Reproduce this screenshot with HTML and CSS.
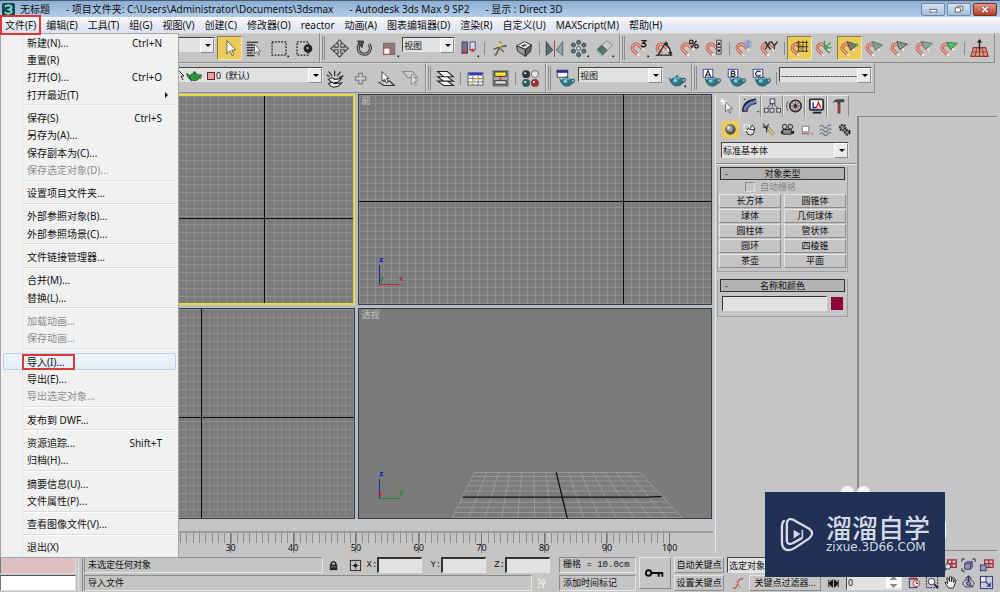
FILE: index.html
```html
<!DOCTYPE html>
<html lang="zh-CN">
<head>
<meta charset="utf-8">
<meta name="viewport" content="width=device-width, initial-scale=1">
<title>无标题 - Autodesk 3ds Max 9 SP2</title>
<link rel="stylesheet" href="styles.css">
</head>
<body>
<svg class="defs" aria-hidden="true">
  <symbol id="magnet" viewBox="0 0 24 24">
    <path d="M11 20 5 14.500A4.300 4.300 0 0 1 11 8.200L17 14" fill="none" stroke="#b0503c" stroke-width="3.600"/>
    <path d="M11 20 5 14.500A4.300 4.300 0 0 1 11 8.200L17 14" fill="none" stroke="#f0ab98" stroke-width="1.800"/>
    <path d="M9.500 18.500 11.500 20.300M15.300 12.300 17.300 14.200" stroke="#f1eeea" stroke-width="3.400"/>
  </symbol>
  <symbol id="teapot" viewBox="0 0 24 24">
    <path d="M17 12q5-2 5 1t-5 4" fill="none" stroke="#27606b" stroke-width="1.500"/>
    <path d="M6 13 2 9.500 3.500 15 8 19z" fill="#357987"/>
    <ellipse cx="12" cy="15" rx="7" ry="5.500" fill="#2f7685" stroke="#1e4d59" stroke-width=".7"/>
    <ellipse cx="12" cy="11" rx="4.500" ry="1.600" fill="#5daab5"/>
    <ellipse cx="10" cy="14" rx="2.500" ry="2" fill="#8bd0d5"/>
    <circle cx="12" cy="8.500" r="1.200" fill="#25606b"/>
  </symbol>
  <symbol id="arrow" viewBox="0 0 24 24">
    <path d="M9 3v15l3.500-3.500 2.500 5.500 2-1-2.400-5.300H19z" fill="#fff" stroke="#555" stroke-width="1"/>
  </symbol>
  <symbol id="more" viewBox="0 0 24 24"><path d="M21 20h2v2h-2z" fill="#222"/></symbol>
  <pattern id="grid" width="8" height="8" patternUnits="userSpaceOnUse">
    <path d="M0 .5H8M.5 0V8" stroke="#8e8e8e" fill="none"/>
  </pattern>
</svg>

<header class="titlebar">
  <svg class="logo" viewBox="0 0 14 14"><rect width="14" height="14" rx="2" fill="#11494f"/><path d="M3 4q4-3 7 0 1 2-2 3 3 1 2 3-3 3-7 0" fill="none" stroke="#7fe0d5" stroke-width="2"/></svg>
  <h1 class="title"><span>无标题</span><span>- 项目文件夹: C:\Users\Administrator\Documents\3dsmax</span><span>- Autodesk 3ds Max 9 SP2</span><span>- 显示 : Direct 3D</span></h1>
  <div class="window-buttons">
    <button aria-label="最小化"><svg viewBox="0 0 24 13"><rect x="8.500" y="6.500" width="8" height="3" fill="#fff" stroke="#666"/></svg></button>
    <button aria-label="还原"><svg viewBox="0 0 24 13"><rect x="10.500" y="2.500" width="6" height="5" fill="#fff" stroke="#555"/><rect x="7.500" y="4.500" width="6" height="5" fill="#fff" stroke="#555"/></svg></button>
    <button class="close" aria-label="关闭"><svg viewBox="0 0 24 13"><path d="m9 3.500 6 6m0-6-6 6" stroke="#733" stroke-width="3.200"/><path d="m9 3.500 6 6m0-6-6 6" stroke="#fff" stroke-width="2"/></svg></button>
  </div>
</header>

<nav class="menubar">
  <button class="marked">文件(F)</button><button>编辑(E)</button><button>工具(T)</button><button>组(G)</button><button>视图(V)</button><button>创建(C)</button><button>修改器(O)</button><button>reactor</button><button>动画(A)</button><button>图表编辑器(D)</button><button>渲染(R)</button><button>自定义(U)</button><button>MAXScript(M)</button><button>帮助(H)</button>
</nav>

<div class="app">
  <div class="toolbar">
    <div class="group lead">
      <span class="combo grow"><select aria-label="选择过滤器"><option></option></select></span>
      <button class="tool on" aria-label="选择对象"><svg viewBox="0 0 24 24"><use href="#arrow"/></svg></button>
      <button class="tool" aria-label="按名称选择"><svg viewBox="0 0 24 24"><path d="M3 5h13M3 8h8M3 11h10M3 14h8M3 17h7M3 20h9" stroke="#333" stroke-width="1.600"/><path d="M12 7v11l2.500-2.500 2 4 1.500-.8-2-3.700h3z" fill="#fff" stroke="#444" stroke-width=".8"/></svg></button>
      <button class="tool" aria-label="矩形选择区域"><svg viewBox="0 0 24 24"><rect x="3.500" y="4.500" width="16" height="15" fill="none" stroke="#222" stroke-width="1.500" stroke-dasharray="2 1.500"/><use href="#more"/></svg></button>
      <button class="tool" aria-label="窗口/交叉"><svg viewBox="0 0 24 24"><rect x="3.500" y="4.500" width="13" height="15" fill="none" stroke="#222" stroke-width="1.500" stroke-dasharray="2 1.500"/><circle cx="16" cy="12" r="5" fill="#222"/><circle cx="15.500" cy="11.500" r="1.600" fill="#999"/></svg></button>
    </div>
    <div class="group">
      <i class="grip"></i>
      <button class="tool" aria-label="移动"><svg viewBox="0 0 24 24"><path d="m12 2 4 4.500h-2.500v4h4V8L22 12l-4.500 4v-2.500h-4v4H16L12 22l-4-4.500h2.500v-4h-4V16L2 12l4.500-4v2.500h4v-4H8z" fill="#bdbdbd" stroke="#444" stroke-width="1.200"/></svg></button>
      <button class="tool" aria-label="旋转"><svg viewBox="0 0 24 24"><path d="M7 6.500A7 7 0 1 0 17 7" fill="none" stroke="#333" stroke-width="3.500"/><path d="M7 6.500A7 7 0 1 0 17 7" fill="none" stroke="#aaa" stroke-width="1.300"/><path d="M4 3.500h7L9 11z" fill="#555" stroke="#222"/></svg></button>
      <button class="tool" aria-label="缩放"><svg viewBox="0 0 24 24"><rect x="5" y="6" width="13" height="13" fill="#8c7a7a" stroke="#666"/><rect x="5.500" y="11.500" width="7" height="7" fill="#fff" stroke="#a44"/><use href="#more"/></svg></button>
      <span class="combo w-coord"><select aria-label="参考坐标系"><option>视图</option></select></span>
      <button class="tool" aria-label="使用轴点中心"><svg viewBox="0 0 24 24"><rect x="3.500" y="4.500" width="6" height="13" fill="#77779a" stroke="#335"/><rect x="12.500" y="4.500" width="6" height="9" fill="#d9d9ee" stroke="#446"/><circle cx="6.500" cy="16" r="2" fill="#d33"/><circle cx="15.500" cy="14" r="2" fill="#d33"/><use href="#more"/></svg></button>
      <i class="sep"></i>
      <button class="tool" aria-label="选择并操纵"><svg viewBox="0 0 24 24"><path d="M13 4v7M5 13l8-3 6-1M12 11l-4 8M13 12l4 4" stroke="#665f46" stroke-width="1.800" fill="none"/><path d="M11 6h3v4h-3z" fill="#e6d75e"/><circle cx="7.500" cy="19" r="1.500" fill="#777"/><circle cx="19" cy="9" r="1.500" fill="#777"/></svg></button>
      <button class="tool" aria-label="命名选择集"><svg viewBox="0 0 24 24"><path d="m3 9 9-5 8 4-7 5z" fill="#eee" stroke="#222"/><path d="m3 9 10 4v8L4 15z" fill="#999" stroke="#222"/><path d="m20 8-7 5v8l6-6z" fill="#666" stroke="#222"/><path d="m8 9 4-2 3 1-4 2z" fill="#333"/></svg></button>
      <i class="sep"></i>
      <button class="tool" aria-label="镜像"><svg viewBox="0 0 24 24"><path d="M2.500 4v16L10 14z" fill="#5c6f75" stroke="#33464c"/><path d="M21.500 4v16L14 14z" fill="#8ba5aa" stroke="#566"/><path d="M12 3v19" stroke="#a24c44" stroke-width="1.200"/></svg></button>
      <button class="tool" aria-label="阵列"><svg viewBox="0 0 24 24" fill="#5f7580" stroke="#35454d"><circle cx="11" cy="5" r="2.300"/><circle cx="17" cy="8" r="2.300"/><circle cx="17" cy="15" r="2.300"/><circle cx="11" cy="19" r="2.300"/><circle cx="5" cy="15" r="2.300"/><circle cx="5" cy="8" r="2.300"/><circle cx="11" cy="12" r="2.300" fill="#d8e4e8"/><use href="#more" stroke="none"/></svg></button>
      <button class="tool" aria-label="对齐"><svg viewBox="0 0 24 24"><path d="m3 14 6-6 6 6-6 6z" fill="#4d7470" stroke="#355"/><path d="m9 8 6-5 6 5-6 6z" fill="#ccc" stroke="#777"/><path d="m3 14 6 6" stroke="#8fb7b0" stroke-width="2"/><use href="#more"/></svg></button>
    </div>
    <div class="group">
      <i class="grip"></i>
      <button class="tool" aria-label="捕捉开关"><svg viewBox="0 0 24 24"><use href="#magnet"/><path d="M14 3h5l-3 3q4 0 3 3-2 2-5 0" fill="none" stroke="#222" stroke-width="1.700"/><use href="#more"/></svg></button>
      <button class="tool" aria-label="角度捕捉"><svg viewBox="0 0 24 24"><use href="#magnet"/><path d="M2 19.500h19M5 19 14 4M13 7q6 3 6 12" fill="none" stroke="#222" stroke-width="1.300"/><path d="m11 6 5-1-1 5zM16 16h5l-2 4z" fill="#222"/></svg></button>
      <button class="tool" aria-label="百分比捕捉"><svg viewBox="0 0 24 24"><use href="#magnet"/><path d="m14 11 6-8" stroke="#222" stroke-width="1.600"/><circle cx="14" cy="4.500" r="2" fill="none" stroke="#222" stroke-width="1.500"/><circle cx="20" cy="9.500" r="2" fill="none" stroke="#222" stroke-width="1.500"/></svg></button>
      <button class="tool" aria-label="微调器捕捉"><svg viewBox="0 0 24 24"><use href="#magnet"/><path d="M14.500 2.500h5v8h-5zm0 8h5v8h-5z" fill="#ddd" stroke="#333"/><path d="m15 8 2-4 2 4zm0 5h4l-2 4z" fill="#222"/></svg></button>
      <i class="sep"></i>
      <button class="tool" aria-label="冻结对象捕捉"><svg viewBox="0 0 24 24"><use href="#magnet"/><path d="M16 2v10M11.500 4.500l9 5M20.500 4.500l-9 5M14 3l2 2 2-2M14 11l2-2 2 2" fill="none" stroke="#7e97d6" stroke-width="1.400"/></svg></button>
      <button class="tool" aria-label="轴约束捕捉"><svg viewBox="0 0 24 24"><use href="#magnet"/><path d="m7 4 6 9m0-9-6 9M14 4l3.500 5L21 4m-3.500 5v4" fill="none" stroke="#333" stroke-width="1.600"/></svg></button>
      <i class="sep"></i>
      <button class="tool on" aria-label="捕捉到栅格点"><svg viewBox="0 0 24 24"><use href="#magnet"/><path d="M11 3v13M16 3v13M20 3v13M8 5h14M9 10h13M9 15h13" stroke="#443b1d" stroke-width="1.100"/></svg></button>
      <button class="tool" aria-label="捕捉到轴"><svg viewBox="0 0 24 24"><use href="#magnet"/><path d="m12 12 8-1M12 12V3M12 12l7-7M12 12l6 5" stroke="#3c9a55" stroke-width="1.500"/></svg></button>
      <button class="tool on" aria-label="捕捉到顶点"><svg viewBox="0 0 24 24"><use href="#magnet"/><path d="m9 4 12 4-8 6z" fill="#7c7a68" stroke="#444"/><circle cx="20.500" cy="8" r="1.700" fill="#3cae4e"/></svg></button>
      <button class="tool" aria-label="捕捉到端点"><svg viewBox="0 0 24 24"><use href="#magnet"/><path d="m9 4 12 4-8 6z" fill="#87a18a" stroke="#667"/><path d="m10 4 11 4" stroke="#3cae4e" stroke-width="1.500"/></svg></button>
      <button class="tool" aria-label="捕捉到中点"><svg viewBox="0 0 24 24"><use href="#magnet"/><path d="m9 4 12 3-9 6z" fill="#98a79a" stroke="#444"/><circle cx="14" cy="7" r="1.700" fill="#3cae4e"/></svg></button>
      <button class="tool" aria-label="捕捉到边"><svg viewBox="0 0 24 24"><use href="#magnet"/><path d="m8 4 13 2-8 7z" fill="#7fb388" stroke="#667"/></svg></button>
      <button class="tool" aria-label="捕捉到面"><svg viewBox="0 0 24 24"><use href="#magnet"/><path d="m9 5 12 1-8 7z" fill="#41d267" stroke="#465"/></svg></button>
      <i class="sep"></i>
      <button class="tool" aria-label="栅格"><svg viewBox="0 0 24 24"><path d="m5 11-3 10h20l-3-10z" fill="#e39283" stroke="#8e392d" stroke-width="1.200"/><path d="M4 16h16M9 11l-2 10M15 11l2 10M12 11v10" stroke="#8e392d"/><path d="M12 14V4" stroke="#222" stroke-width="1.600"/><path d="m12 1 3 4H9z" fill="#222"/></svg></button>
    </div>
  </div>

  <div class="toolbar">
    <div class="group lead-wide">
      <span class="combo grow layer"><select aria-label="图层"><option>0&nbsp;&nbsp;(默认)</option></select>
        <svg class="layer-icons" viewBox="0 0 38 12"><path d="m0 1 5 5-3 0 2 4" fill="#fff" stroke="#222"/><path d="M11 6 8 4l1 3 3 3zM20 5q4-1 1 4" fill="none" stroke="#145a1e" stroke-width="1.200"/><ellipse cx="15.500" cy="7" rx="5" ry="3.600" fill="#2a9a38" stroke="#0d4a17" stroke-width=".8"/><circle cx="15.500" cy="2.500" r="1.200" fill="#145a1e"/><rect x="28.500" y="2.500" width="7" height="7" fill="#e9a2a2" stroke="#623"/></svg></span>
      <button class="tool" aria-label="新建图层"><svg viewBox="0 0 24 24"><path d="m4 13 4-2 3 2 8-1-4 4-5 1-3-1zM4 18l4-2 3 2 8-1-4 4-5 1-3-1z" fill="#eee" stroke="#222" stroke-width="1.200"/><path d="M11 9V3M8 9 4 4M14 9l4-5M16 11l5-2M5 10 2 8" stroke="#222" stroke-width="1.300"/></svg></button>
      <button class="tool" aria-label="添加到图层"><svg viewBox="0 0 24 24"><path d="M10 6h4v4h4v4h-4v4h-4v-4H6v-4h4z" fill="#ccc" stroke="#777" stroke-width="1.300"/></svg></button>
      <button class="tool" aria-label="选择图层对象"><svg viewBox="0 0 24 24"><path d="m4 16 6 4h12l-5-5H9" fill="#ccc" stroke="#333" stroke-width="1.300"/><path d="M8 4v11l3-2 2 4 2-1-2-4h3z" fill="#fff" stroke="#333"/></svg></button>
      <button class="tool" aria-label="设为当前图层"><svg viewBox="0 0 24 24"><path d="M3 4h11l6 7H9z" fill="#ccc" stroke="#888" stroke-width="1.300"/><path d="M13 7v12l3-3 2 4 1-1-2-4h3z" fill="#ddd" stroke="#888"/></svg></button>
    </div>
    <div class="group">
      <i class="grip"></i>
      <button class="tool" aria-label="层管理器"><svg viewBox="0 0 24 24"><path d="M3 15h11l7 5H10zM3 10h11l7 5H10zM3 4h11l7 6H10z" fill="#fff" stroke="#222" stroke-width="1.200"/></svg></button>
      <i class="sep"></i>
      <button class="tool" aria-label="曲线编辑器"><svg viewBox="0 0 24 24"><rect x="3.500" y="5.500" width="17" height="14" fill="#fff" stroke="#445"/><path d="M4 7h16" stroke="#3a34c4" stroke-width="3"/><path d="M9 9v10M4 12h16M4 16h16M15 9v10" stroke="#667"/><path d="m7 18 6-6 6 2" stroke="#d8cf38" stroke-width="1.500" fill="none"/></svg></button>
      <button class="tool" aria-label="图解视图"><svg viewBox="0 0 24 24"><rect x="3.500" y="3.500" width="17" height="17" fill="#aaa" stroke="#444"/><rect x="5.500" y="4.500" width="13" height="5" fill="#f4e53b" stroke="#222"/><rect x="5.500" y="14.500" width="13" height="4" fill="#ddd" stroke="#222"/><path d="M12 10v4" stroke="#c33" stroke-width="2"/></svg></button>
      <i class="sep"></i>
      <button class="tool" aria-label="材质编辑器"><svg viewBox="0 0 24 24"><circle cx="7" cy="7" r="4.500" fill="#2a3444"/><circle cx="17" cy="7" r="4" fill="#e6e6e6" stroke="#666"/><circle cx="7" cy="17" r="4.500" fill="#285f57"/><circle cx="17" cy="17" r="4.500" fill="#9c2c33"/><g fill="#fff"><circle cx="6" cy="6" r="1.200"/><circle cx="6" cy="16" r="1.200"/><circle cx="16" cy="16" r="1.200"/></g></svg></button>
    </div>
    <div class="group">
      <i class="grip"></i>
      <button class="tool" aria-label="渲染场景"><svg viewBox="0 0 24 24"><rect x="2.500" y="2.500" width="12" height="8" fill="#fff" stroke="#335"/><path d="M2 4h13" stroke="#2b2c9a" stroke-width="3"/><use href="#teapot" x="3" y="3" width="21" height="21"/></svg></button>
      <span class="combo w-view"><select aria-label="渲染类型"><option>视图</option></select></span>
      <button class="tool" aria-label="快速渲染"><svg viewBox="0 0 24 24"><use href="#teapot" x="1" y="1" width="23" height="23"/><use href="#more"/></svg></button>
    </div>
    <div class="group">
      <i class="grip"></i>
      <button class="tool" aria-label="渲染预设 A"><svg viewBox="0 0 24 24"><use href="#teapot" x="2" y="2" width="22" height="22"/><rect x="2.500" y="1.500" width="11" height="9" fill="#fff" stroke="#3538a0"/><path d="m5 10 3-7 3 7M6 8h4" fill="none" stroke="#222" stroke-width="1.300"/></svg></button>
      <button class="tool" aria-label="渲染预设 B"><svg viewBox="0 0 24 24"><use href="#teapot" x="2" y="2" width="22" height="22"/><rect x="2.500" y="1.500" width="11" height="9" fill="#fff" stroke="#3538a0"/><path d="M6 3.500h3q2 1.500 0 3 3 1 0 3H6zM6 6.500h3" fill="none" stroke="#222" stroke-width="1.300"/></svg></button>
      <button class="tool" aria-label="渲染预设 C"><svg viewBox="0 0 24 24"><use href="#teapot" x="2" y="2" width="22" height="22"/><rect x="2.500" y="1.500" width="11" height="9" fill="#fff" stroke="#3538a0"/><path d="M11 4.500Q8 2.500 6 5t1 4q2 1 4-1" fill="none" stroke="#222" stroke-width="1.300"/></svg></button>
      <i class="sep"></i>
      <span class="combo w-preset"><select aria-label="渲染预设"><option>---------------------------</option></select></span>
    </div>
  </div>

  <div class="workspace">
    <main class="stage">
      <section class="viewports">
        <div class="viewport active"><svg class="canvas"><rect width="100%" height="100%" fill="url(#grid)"/><line x1="75%" x2="75%" y2="100%"/><line y1="59%" y2="59%" x2="100%"/></svg></div>
        <div class="viewport"><svg class="canvas"><rect width="100%" height="100%" fill="url(#grid)"/><line x1="75%" x2="75%" y2="100%"/><line y1="51%" y2="51%" x2="100%"/></svg>
          <span class="view-name">前</span>
          <svg class="tripod" viewBox="0 0 32 34"><path d="M2.500 10v20" stroke="#22a"/><path d="M2 29.500h21" stroke="#b02a38"/><text x="2" y="7" fill="#11b">z</text><text x="2" y="26" fill="#2a7a3c">y</text><text x="22" y="26" fill="#b02a38">x</text></svg></div>
        <div class="viewport"><svg class="canvas"><rect width="100%" height="100%" fill="url(#grid)"/><line x1="57%" x2="57%" y2="100%"/><line y1="52%" y2="52%" x2="100%"/></svg></div>
        <div class="viewport"><svg class="canvas" viewBox="0 0 353 209" preserveAspectRatio="xMidYMax meet">
            <g stroke="#a0a0a0" stroke-width=".8"><path d="M116 163.500H281M114 167.500H284M112 172H289M109 177H294M106 182H299M101 193H309M99 198.500H314M96 203.500H318M94 208.500H323"/><path d="M116 163 93 209M128 163 110 209M140 163 126 209M151 163 143 209M163 163 159 209M175 163 176 209M187 163 192 209M210 163 225 209M222 163 241 209M234 163 258 209M246 163 275 209M257 163 291 209M269 163 308 209M281 163 324 209"/></g>
            <path d="M104 188h187l6-.5h6M197.500 163l11 46" stroke="#111" stroke-width="1.300" fill="none"/></svg>
          <span class="view-name">透视</span>
          <svg class="tripod" viewBox="0 0 32 34"><path d="M2.500 10v20" stroke="#22a"/><path d="M2 29.500h21" stroke="#1d8a1d"/><text x="2" y="7" fill="#11b">z</text><text x="1" y="27" fill="#c22">x</text><text x="22" y="25" fill="#1d8a1d">y</text></svg></div>
      </section>
      <div class="ruler"><span></span><span></span><span></span><span>30</span><span>40</span><span>50</span><span>60</span><span>70</span><span>80</span><span>90</span><span class="last">100</span></div>
    </main>

    <aside class="panel">
      <div class="command">
        <div class="tabs">
          <button aria-label="创建"><svg viewBox="0 0 20 18"><path d="M8 5v10l2.500-2.500 2 4 1.500-1-2-3.500h3.500z" fill="#fff" stroke="#666"/><path d="M5 1v7M2 4h7M3 2l5 5" stroke="#fff" stroke-width="1.200"/></svg></button>
          <button aria-label="修改"><svg viewBox="0 0 20 18"><path d="M4 15Q4 5 16 4" fill="none" stroke="#1b2238" stroke-width="6"/><path d="M4 14Q5 6 16 4" fill="none" stroke="#7280b8" stroke-width="3"/><path d="M3 2h2M17 15h2" stroke="#333"/></svg></button>
          <button aria-label="层次"><svg viewBox="0 0 20 18"><path d="M10 6v4M9 6l-6 7M11 6l6 7" stroke="#445"/><g fill="#ddd" stroke="#445"><rect x="7.500" y="1.500" width="5" height="5"/><rect x="1.500" y="11.500" width="4" height="4"/><rect x="7.500" y="11.500" width="4" height="4"/><rect x="14.500" y="11.500" width="4" height="4"/></g></svg></button>
          <button aria-label="运动"><svg viewBox="0 0 20 18"><circle cx="11" cy="9" r="6" fill="#bbb" stroke="#222" stroke-width="1.600"/><path d="M11 3v12M5 9h12M7 5l8 8M15 5l-8 8" stroke="#855"/><circle cx="11" cy="9" r="2" fill="#333"/><path d="M3 4Q0 9 3 14" fill="none" stroke="#555"/></svg></button>
          <button aria-label="显示"><svg viewBox="0 0 20 18"><rect x="3" y="2" width="14" height="11" rx="1" fill="#fff" stroke="#333" stroke-width="2"/><path d="M6.500 5v5.500h3" stroke="#22b" stroke-width="1.500" fill="none"/><path d="m10 11 2-6 2.500 6" stroke="#c23" stroke-width="1.500" fill="none"/><path d="M6 16h9" stroke="#222" stroke-width="2"/></svg></button>
          <button aria-label="工具"><svg viewBox="0 0 20 18"><path d="M4 6q1-4 6-4h6v3h-4v2H9V5Q6 4 4 6z" fill="#444"/><path d="M10.500 7v10" stroke="#8e3c34" stroke-width="3"/></svg></button>
        </div>
        <div class="categories">
          <button class="on" aria-label="几何体"><svg viewBox="0 0 16 16"><circle cx="8" cy="8" r="5" fill="#555" stroke="#444"/><circle cx="7" cy="7" r="3.500" fill="#9aa2a6"/><circle cx="6" cy="6" r="1.500" fill="#eee"/></svg></button>
          <button aria-label="图形"><svg viewBox="0 0 16 16"><circle cx="9" cy="10" r="4" fill="#ddd" stroke="#222"/><path d="M2 3h6v6H2z" fill="none" stroke="#eee"/><path d="m8 8 3-5 3 5z" fill="#eee" stroke="#333"/></svg></button>
          <button aria-label="灯光"><svg viewBox="0 0 16 16"><path d="m5 5 3 0 6 7-2 2z" fill="#eadd77" stroke="#776"/><path d="m2 2 5 5M8 2 6 7v4M2 5l5 2" stroke="#333" fill="none" stroke-width="1.200"/></svg></button>
          <button aria-label="摄影机"><svg viewBox="0 0 16 16"><circle cx="5" cy="5" r="2.500" fill="#bbb" stroke="#222"/><circle cx="11" cy="5" r="2.500" fill="#bbb" stroke="#222"/><path d="M3 8h9v5H3z" fill="#888" stroke="#222"/><path d="m1 9 2 1v2l-2 1zM15 9l-3 1v2l3 1z" fill="#222"/></svg></button>
          <button aria-label="辅助对象"><svg viewBox="0 0 16 16"><rect x="3.500" y="4.500" width="7" height="6" fill="#fff" stroke="#778"/><path d="M3 12.500h8M13 12.500h2" stroke="#a44"/></svg></button>
          <button aria-label="空间扭曲"><svg viewBox="0 0 16 16"><path d="M2 5q2-3 4 0t4 0 4-1M2 9q2-3 4 0t4 0 4-1M2 13q2-3 4 0t4 0 4-1" fill="none" stroke="#5f7183" stroke-width="1.200"/></svg></button>
          <button aria-label="系统"><svg viewBox="0 0 16 16"><circle cx="6" cy="6" r="3" fill="#888" stroke="#222" stroke-width="2" stroke-dasharray="2 1"/><circle cx="11" cy="11" r="2.500" fill="#888" stroke="#222" stroke-width="2" stroke-dasharray="2 1"/></svg></button>
        </div>
        <span class="combo kind"><select aria-label="类别"><option>标准基本体</option></select></span>
        <div class="rollouts">
          <section class="rollout">
            <h2><button><span>-</span>对象类型</button></h2>
            <label class="auto"><input type="checkbox" disabled>自动栅格</label>
            <div class="objects"><button>长方体</button><button>圆锥体</button><button>球体</button><button>几何球体</button><button>圆柱体</button><button>管状体</button><button>圆环</button><button>四棱锥</button><button>茶壶</button><button>平面</button></div>
          </section>
          <section class="rollout">
            <h2><button><span>-</span>名称和颜色</button></h2>
            <div class="name-row"><input type="text" aria-label="名称"><button class="swatch" aria-label="颜色"></button></div>
          </section>
        </div>
      </div>
      <div class="empty"></div>
    </aside>
  </div>

  <footer class="status">
    <div class="listener"><input class="pink" aria-label="宏录制器"><input aria-label="侦听器"></div>
    <div class="messages">
      <div class="line">
        <output class="cell grow">未选定任何对象</output>
        <button class="plain" aria-label="选择锁定"><svg viewBox="0 0 14 14"><path d="M4.500 7V4.500q2.500-3 5 0V7" fill="none" stroke="#222" stroke-width="1.500"/><rect x="3" y="6" width="8" height="6" fill="#222"/><path d="M4 8.500h6" stroke="#888"/></svg></button>
        <button class="plain" aria-label="绝对模式"><svg viewBox="0 0 14 14"><rect x="1.500" y="1.500" width="11" height="11" fill="none" stroke="#222"/><path d="M7 3v8M3 7h8" stroke="#555"/><circle cx="7" cy="7" r="2" fill="#222"/></svg></button>
        <label class="axis">X:<input type="text"></label><label class="axis">Y:<input type="text"></label><label class="axis">Z:<input type="text"></label>
      </div>
      <div class="line"><output class="cell grow">导入文件</output><svg class="mini" viewBox="0 0 14 14"><path d="M5 2v3h3M4 8l4-1 2 5M9 3l2 3-3 5M3 11l3 1" fill="none" stroke="#e6e6dc" stroke-width="1.500"/></svg></div>
    </div>
    <div class="stack w-grid"><output class="cell mono">栅格 = 10.0cm</output><button class="cell">添加时间标记</button></div>
    <button class="key" aria-label="设置关键点"><svg viewBox="0 0 24 14"><circle cx="5" cy="7" r="3" fill="none" stroke="#111" stroke-width="2"/><path d="M8 7h13M16 7v4M20 7v4" stroke="#111" stroke-width="2"/></svg></button>
    <div class="stack w-auto"><button class="raised">自动关键点</button><button class="raised">设置关键点</button></div>
    <div class="stack w-filter">
      <span class="combo"><select aria-label="选择集"><option>选定对象</option></select></span>
      <div class="line"><button class="plain" aria-label="切线"><svg viewBox="0 0 14 14"><path d="M1 12q4 1 5-5t6-5" fill="none" stroke="#c33" stroke-width="1.200"/><path d="m4 4 5 8" stroke="#a88"/></svg></button><button class="raised grow">关键点过滤器...</button></div>
    </div>
    <button class="plain low step" aria-label="关键点模式"><svg viewBox="0 0 14 14"><path d="M2 3v8M12 3v8M2 7l4-4v8zM12 7 8 3v8z" fill="#111" stroke="#111"/></svg></button>
    <input class="frame low" type="number" value="0" aria-label="当前帧">
    <div class="nav">
      <button aria-label="播放"></button><button aria-label="缩放"></button>
      <button aria-label="缩放全部"><svg viewBox="0 0 16 16"><path d="M5 2h9v8H5zM9.500 2v8M5 6h9" fill="#e8c0c0" stroke="#9a2c3a" stroke-width="1.500"/><circle cx="5" cy="9" r="3" fill="#ddd" stroke="#335"/><path d="m3 11-2 3" stroke="#335" stroke-width="2"/></svg></button>
      <button aria-label="最大化显示"><svg viewBox="0 0 16 16"><path d="m4 6 2-2h6v6l-2 2H4zM4 6h6v6M10 6l2-2" fill="#99a" stroke="#337"/><path d="M1 4V1h3M12 1h3v3M1 11v3h3" fill="none" stroke="#222"/></svg></button>
      <button aria-label="所有视图最大化显示"><svg viewBox="0 0 16 16"><path d="M6 2h9v8H6zM10.500 2v8M6 6h9" fill="#d8b0b8" stroke="#9a2c3a" stroke-width="1.300"/><rect x="1.500" y="7.500" width="6" height="6" fill="#99b" stroke="#337"/></svg></button>
      <button aria-label="时间配置"><svg viewBox="0 0 16 16"><rect x="2.500" y="3.500" width="8" height="10" fill="#ccc" stroke="#335"/><path d="M2 4h9" stroke="#a33" stroke-width="2"/><circle cx="10" cy="9" r="3.500" fill="#eee" stroke="#a33"/><path d="M10 7v2h2" fill="none" stroke="#222"/></svg></button>
      <button aria-label="缩放区域"><svg viewBox="0 0 16 16"><rect x="1.500" y="1.500" width="12" height="12" fill="none" stroke="#222" stroke-dasharray="2 1"/><circle cx="7" cy="7" r="3.500" fill="#eee" stroke="#335"/><path d="m10 10 4 4" stroke="#224" stroke-width="2"/></svg></button>
      <button aria-label="平移"><svg viewBox="0 0 16 16"><path d="M6 14 2 8q1-1 3 1L4 3q1-1 2 1l1 3V2q1-1 2 0v5l1-4q1-1 2 0l-1 5 2-3q1 0 1 1l-3 8z" fill="#eee" stroke="#222"/></svg></button>
      <button aria-label="弧形旋转"><svg viewBox="0 0 16 16"><ellipse cx="8" cy="9" rx="6" ry="4" fill="none" stroke="#335"/><path d="M8 1v9M8 10l5 3M5 4l3-3 3 3" fill="none" stroke="#335" stroke-width="1.200"/><circle cx="8" cy="9" r="2" fill="#99b" stroke="#224"/></svg></button>
      <button aria-label="最大化视口切换"><svg viewBox="0 0 16 16"><rect x="1.500" y="1.500" width="13" height="13" fill="#ccd" stroke="#337"/><rect x="1.500" y="1.500" width="6" height="6" fill="#eee" stroke="#337"/><path d="m7 7 5 5M12 8v4H8" fill="none" stroke="#337" stroke-width="1.300"/></svg></button>
    </div>
  </footer>

  <menu class="file-menu">
    <li><button>新建(N)...<kbd>Ctrl+N</kbd></button></li>
    <li><button>重置(R)</button></li>
    <li><button>打开(O)...<kbd>Ctrl+O</kbd></button></li>
    <li><button>打开最近(T)<i class="sub"></i></button></li>
    <li class="rule"></li>
    <li><button>保存(S)<kbd>Ctrl+S</kbd></button></li>
    <li><button>另存为(A)...</button></li>
    <li><button>保存副本为(C)...</button></li>
    <li><button disabled>保存选定对象(D)...</button></li>
    <li class="rule"></li>
    <li><button>设置项目文件夹...</button></li>
    <li class="rule"></li>
    <li><button>外部参照对象(B)...</button></li>
    <li><button>外部参照场景(C)...</button></li>
    <li class="rule"></li>
    <li><button>文件链接管理器...</button></li>
    <li class="rule"></li>
    <li><button>合并(M)...</button></li>
    <li><button>替换(L)...</button></li>
    <li class="rule"></li>
    <li><button disabled>加载动画...</button></li>
    <li><button disabled>保存动画...</button></li>
    <li class="rule"></li>
    <li><button class="hot"><span class="marked">导入(I)...</span></button></li>
    <li><button>导出(E)...</button></li>
    <li><button disabled>导出选定对象...</button></li>
    <li class="rule"></li>
    <li><button>发布到 DWF...</button></li>
    <li class="rule"></li>
    <li><button>资源追踪...<kbd>Shift+T</kbd></button></li>
    <li><button>归档(H)...</button></li>
    <li class="rule"></li>
    <li><button>摘要信息(U)...</button></li>
    <li><button>文件属性(P)...</button></li>
    <li class="rule"></li>
    <li><button>查看图像文件(V)...</button></li>
    <li class="rule"></li>
    <li><button>退出(X)</button></li>
  </menu>

  <div class="brand">
    <svg class="brand-mark" viewBox="0 0 36 36" fill="none" stroke="#d5dae4" stroke-linecap="round" stroke-linejoin="round"><path d="M4 4Q2 6 2 10v16q0 8 7 8 3 0 6-2l15-10q6-5 0-10L14 3Q7 0 7 8v17q1 4 6 2l9-5" stroke-width="2.400"/><path d="m14 13 7 4.500-7 4.500z" fill="#d5dae4" stroke="none"/><path d="M23 14v7" stroke-width="1.600"/></svg>
    <div class="brand-text"><strong>溜溜自学</strong><span>zixue.3D66.COM</span></div>
  </div>
</div>
</body>
</html>
```

FILE: styles.css
```css
:root {
  --face: #c5c5c5;
  --light: #e6e6e6;
  --shade: #8b8b8b;
  --dark: #444;
  --field: #e2e2e2;
  --gold: #eccb58;
  --red: #da3a32;
}
* { box-sizing: border-box; }
body {
  margin: 0;
  min-height: 100vh;
  display: flex;
  flex-direction: column;
  background: var(--face);
  color: #111;
  font: 9px/12px "Noto Sans", "Noto Sans CJK SC", sans-serif;
  overflow: hidden;
}
button, input, select, output, kbd { font: inherit; color: inherit; margin: 0; }
button { padding: 0; border: 0; background: none; white-space: nowrap; }
svg { display: block; }
.defs { position: absolute; width: 0; height: 0; }
.grow { flex: 1; min-width: 0; }

/* title bar */
.titlebar {
  display: flex;
  align-items: center;
  height: 17px;
  padding: 0 3px 0 2px;
  border-top: 1px solid #4a5b70;
  background: linear-gradient(#8daed3, #b3cde8);
}
.logo { width: 13px; height: 13px; }
.title { display: flex; flex: 1; gap: 16px; margin: 0 0 0 5px; font: inherit; font-size: 10px; white-space: pre; }
.window-buttons { display: flex; gap: 2px; }
.window-buttons button { width: 24px; height: 13px; border: 1px solid #6d86a5; border-radius: 2px; background: linear-gradient(#d4e2f1, #a5bfdc); }
.window-buttons .close { border-color: #7c2a22; background: linear-gradient(#e09a8c, #b83c2a); }
.window-buttons svg { width: 100%; height: 100%; }

/* menu bar */
.menubar {
  display: flex;
  gap: 4px;
  height: 16px;
  padding-left: 2px;
  background: linear-gradient(#fbfcfe, #e9ecf6 45%, #dde1f0);
}
.menubar button { padding: 0 3px; font-size: 10px; }
.menubar .marked { position: relative; z-index: 3; outline: 2px solid var(--red); }

.app { position: relative; flex: 1; display: flex; flex-direction: column; }

/* toolbars */
.toolbar { display: flex; height: 30px; }
.group { display: flex; align-items: center; padding-right: 2px; border: 1px solid; border-color: #d6d6d6 var(--shade) var(--shade) #d6d6d6; }
.lead { width: 320px; padding-left: 120px; }
.lead-wide { width: 426px; padding-left: 165px; }
.grip { width: 3px; height: 24px; margin: 0 2px 0 1px; border: solid var(--shade); border-width: 0 1px; }
.sep { width: 1px; height: 13px; margin: 0 2px; background: var(--shade); }
.tool { flex: none; width: 25px; height: 24px; }
.tool svg { width: 21px; height: 21px; margin: auto; }
.tool.on { border: 1px solid; border-color: #8d7d42 #f4e7b0 #f4e7b0 #8d7d42; background: var(--gold); }

.combo { display: grid; align-items: center; height: 15px; border: 1px solid; border-color: var(--dark) var(--light) var(--light) var(--dark); background: var(--field); }
.combo select { grid-area: 1 / 1; width: 100%; height: 13px; padding: 0 14px 0 1px; border: 0; background: none; appearance: none; line-height: 12px; }
.combo::before, .combo::after { content: ""; grid-area: 1 / 1; justify-self: end; pointer-events: none; }
.combo::before { width: 12px; height: 13px; border: 1px solid; border-color: #fff var(--shade) var(--shade) #fff; background: #ececec; }
.combo::after { width: 6px; height: 3px; margin-right: 3px; background: #000; clip-path: polygon(0 0, 100% 0, 50% 100%); }
.toolbar .combo { align-self: flex-start; margin-top: 3px; }
.lead .combo { margin-right: 2px; }
.w-coord { width: 53px; margin-right: 2px; }
.w-view { width: 85px; margin-right: 1px; }
.w-preset { width: 93px; }
.layer-icons { grid-area: 1 / 1; width: 38px; height: 12px; margin-left: 12px; pointer-events: none; }
.layer select { padding-left: 49px; }

/* workspace */
.workspace { flex: 1; display: flex; }
.stage { flex: 1; min-width: 0; display: flex; flex-direction: column; }
.viewports { flex: 1; display: grid; grid-template: 1fr 1fr / 1fr 1fr; gap: 3px; padding: 1px 1px 0 0; background: #b9bcc0; }
.viewport { position: relative; overflow: hidden; border: 1px solid #343d48; background: #7b7b7b; }
.viewport.active { border: 2px solid #e5dc3f; }
.canvas { position: absolute; inset: 0; width: 100%; height: 100%; }
.canvas line { stroke: #0e0e0e; stroke-width: 1; shape-rendering: crispEdges; }
.view-name { position: absolute; top: 0; left: 3px; color: #c4c4c4; }
.tripod { position: absolute; left: 18px; bottom: 15px; width: 32px; height: 34px; font: bold 8px "Liberation Mono", monospace; }
.ruler { display: grid; grid-template-columns: repeat(11, 1fr); margin-top: 12px; padding: 0 12px 0 11px; border-top: 2px solid #9c9c9c; height: 22px; }
.ruler span {
  padding-top: 9px;
  text-align: center;
  line-height: 11px;
  background:
    linear-gradient(#777, #777) 50% 0 / 1px 100% no-repeat,
    repeating-linear-gradient(90deg, #8d8d8d 0 1px, transparent 1px 10%) 0 0 / 100% 10px no-repeat;
}
.ruler .last { background: linear-gradient(#777, #777) 50% 0 / 1px 100% no-repeat, repeating-linear-gradient(90deg, #8d8d8d 0 1px, transparent 1px 20%) 0 0 / 50% 10px no-repeat; }

/* command panel */
.panel { display: flex; width: 287px; padding: 2px 3px 0 2px; }
.command { width: 142px; border-left: 1px solid var(--light); }
.empty { flex: 1; margin: 21px 0 2px; border: solid var(--shade); border-width: 1px 0 1px 2px; }
.tabs { display: flex; height: 22px; }
.tabs button { width: 22px; margin-right: 1px; border: 1px solid; border-color: var(--light) var(--shade) var(--face) var(--light); }
.tabs button:first-child { border-color: transparent; }
.tabs button + button { margin-right: 0; }
.tabs svg { width: 19px; height: 18px; margin: auto; }
.categories { display: flex; gap: 2px; padding: 4px 0 3px 6px; }
.categories button { width: 17px; height: 17px; }
.categories svg { width: 15px; height: 15px; margin: auto; }
.categories .on { background: var(--gold); }
.kind { margin: 1px 8px 5px 5px; height: 16px; }
.rollouts { padding: 3px 9px 0 1px; border-top: 1px solid var(--shade); box-shadow: inset 0 1px var(--light); }
.rollout { position: relative; padding: 0 1px 3px; margin-bottom: 7px; border: solid #a0a0a0; border-width: 0 1px 1px; }
.rollout h2 { margin: 0; padding: 0 1px; font: inherit; }
.rollout h2 button { display: block; position: relative; width: 100%; height: 13px; border: 1px solid #333; background: #b3b3b3; line-height: 11px; }
.rollout h2 span { position: absolute; left: 4px; }
.auto { display: flex; align-items: center; gap: 5px; height: 14px; padding-left: 26px; color: #858585; }
.auto input { width: 10px; height: 10px; margin: 0; appearance: none; border: 1px solid; border-color: #888 #ddd #ddd #888; }
.objects { display: grid; grid-template-columns: 1fr 1fr; gap: 1px 3px; }
.objects button { height: 14px; line-height: 12px; }
.objects button, .raised { border: 1px solid; border-color: var(--light) var(--shade) var(--shade) var(--light); }
.name-row { display: flex; align-items: center; gap: 4px; padding: 4px 3px 2px; }
input[type="text"] { min-width: 0; border: 1px solid; border-color: #333 var(--light) var(--light) #333; background: var(--field); padding: 0; }
.name-row input { flex: 1; height: 15px; }
.swatch { width: 12px; height: 13px; background: #8d0838; }

/* status bar */
.status { display: flex; gap: 3px; height: 39px; padding: 4px 5px 1px 0; }
.listener { display: flex; flex-direction: column; gap: 1px; width: 79px; border-right: 1px solid var(--light); padding-right: 2px; }
.listener input { width: 100%; height: 17px; padding: 0; border: 1px solid; border-color: #555 #ddd #ddd #777; background: #fff; }
.listener .pink { background: #dfc0c2; }
.messages { flex: 1; display: flex; flex-direction: column; gap: 2px; min-width: 0; border-left: 1px solid var(--shade); padding-left: 1px; }
.line { display: flex; align-items: center; }
.cell { display: block; height: 16px; padding: 0 3px; text-align: left; border: 1px solid; border-color: var(--shade) var(--light) var(--light) var(--shade); line-height: 14px; white-space: nowrap; }
.plain { width: 22px; height: 16px; }
.plain svg { width: 13px; height: 13px; margin: auto; }
.axis { display: flex; align-items: center; margin-left: 8px; font-family: "Liberation Mono", monospace; }
.axis input { width: 45px; height: 16px; border-width: 2px 1px 1px 2px; }
.plain + .axis { margin-left: 0; }
.mini { width: 18px; height: 14px; }
.stack { display: flex; flex-direction: column; gap: 2px; }
.stack > * { height: 16px; width: 100%; }
.w-grid { width: 77px; margin-left: 6px; }
.mono { font-family: "Liberation Mono", "Noto Sans CJK SC", monospace; }
.key { width: 32px; height: 32px; border: 1px solid; border-color: var(--light) var(--shade) var(--shade) var(--light); }
.key svg { width: 22px; height: 14px; margin: auto; }
.w-auto { width: 50px; }
.raised { height: 16px; line-height: 14px; }
.w-filter { width: 94px; }
.low { margin-top: 18px; }
.step { width: 19px; }
.frame { width: 56px; height: 15px; padding: 0 0 0 1px; border: 1px solid; border-color: var(--dark) var(--light) var(--light) var(--dark); background: var(--field); }
.frame::-webkit-inner-spin-button { opacity: 1; width: 9px; }
.nav { display: grid; grid-template-columns: repeat(5, 18px); gap: 1px 0; grid-auto-rows: 16px; }
.nav svg { width: 15px; height: 15px; margin: auto; }

/* file menu */
.file-menu {
  position: absolute;
  z-index: 2;
  top: 0;
  left: 0;
  bottom: 34px;
  width: 179px;
  display: flex;
  flex-direction: column;
  margin: 0;
  padding: 0 2px 1px;
  list-style: none;
  border: 1px solid #a5a5a5;
  background: linear-gradient(90deg, #f1f1f1 21px, #e4e4e4 21px 22px, #f1f1f1 22px);
}
.file-menu li { flex: 1 1 17px; display: flex; }
.file-menu .rule { flex: none; height: 6px; margin-left: 21px; border-top: 1px solid transparent; border-bottom: 3px solid transparent; background: linear-gradient(#dedede 50%, #fff 50%) padding-box; }
.file-menu button { flex: 1; display: flex; align-items: center; padding: 0 13px 0 23px; border: 1px solid transparent; border-radius: 2px; font-size: 10px; }
.file-menu button:disabled { color: #8c8c8c; }
.file-menu .hot { border-color: #b5d3f1; background: linear-gradient(#f0f4fa, #e2ecf8); }
.file-menu .marked { margin-left: -3px; padding: 0 9px 0 3px; outline: 2px solid var(--red); }
kbd { margin-left: auto; }
.sub { margin: 0 -6px 0 auto; border: solid transparent; border-width: 3px 0 3px 3px; border-left-color: #111; }

/* brand card over the corner */
.brand {
  position: absolute;
  z-index: 4;
  right: 55px;
  bottom: 15px;
  width: 180px;
  height: 85px;
  display: flex;
  align-items: center;
  gap: 11px;
  padding-left: 15px;
  background: #213055;
  color: #d5dae4;
}
.brand::before { content: ""; position: absolute; z-index: -1; left: 76px; top: -6px; width: 13px; height: 6px; border-radius: 7px 7px 0 0; background: #f4f4f4; box-shadow: 16px 0 #f4f4f4; }
.brand::after { content: ""; position: absolute; left: 180px; top: 30px; width: 1px; height: 16px; background: #fff; }
.brand-mark { width: 35px; height: 35px; }
.brand-text { padding-bottom: 3px; }
.brand-text strong { display: block; font: 500 26px/28px "Noto Sans CJK SC", sans-serif; }
.brand-text span { display: block; font: 12px/12px "DejaVu Sans", sans-serif; }
```
